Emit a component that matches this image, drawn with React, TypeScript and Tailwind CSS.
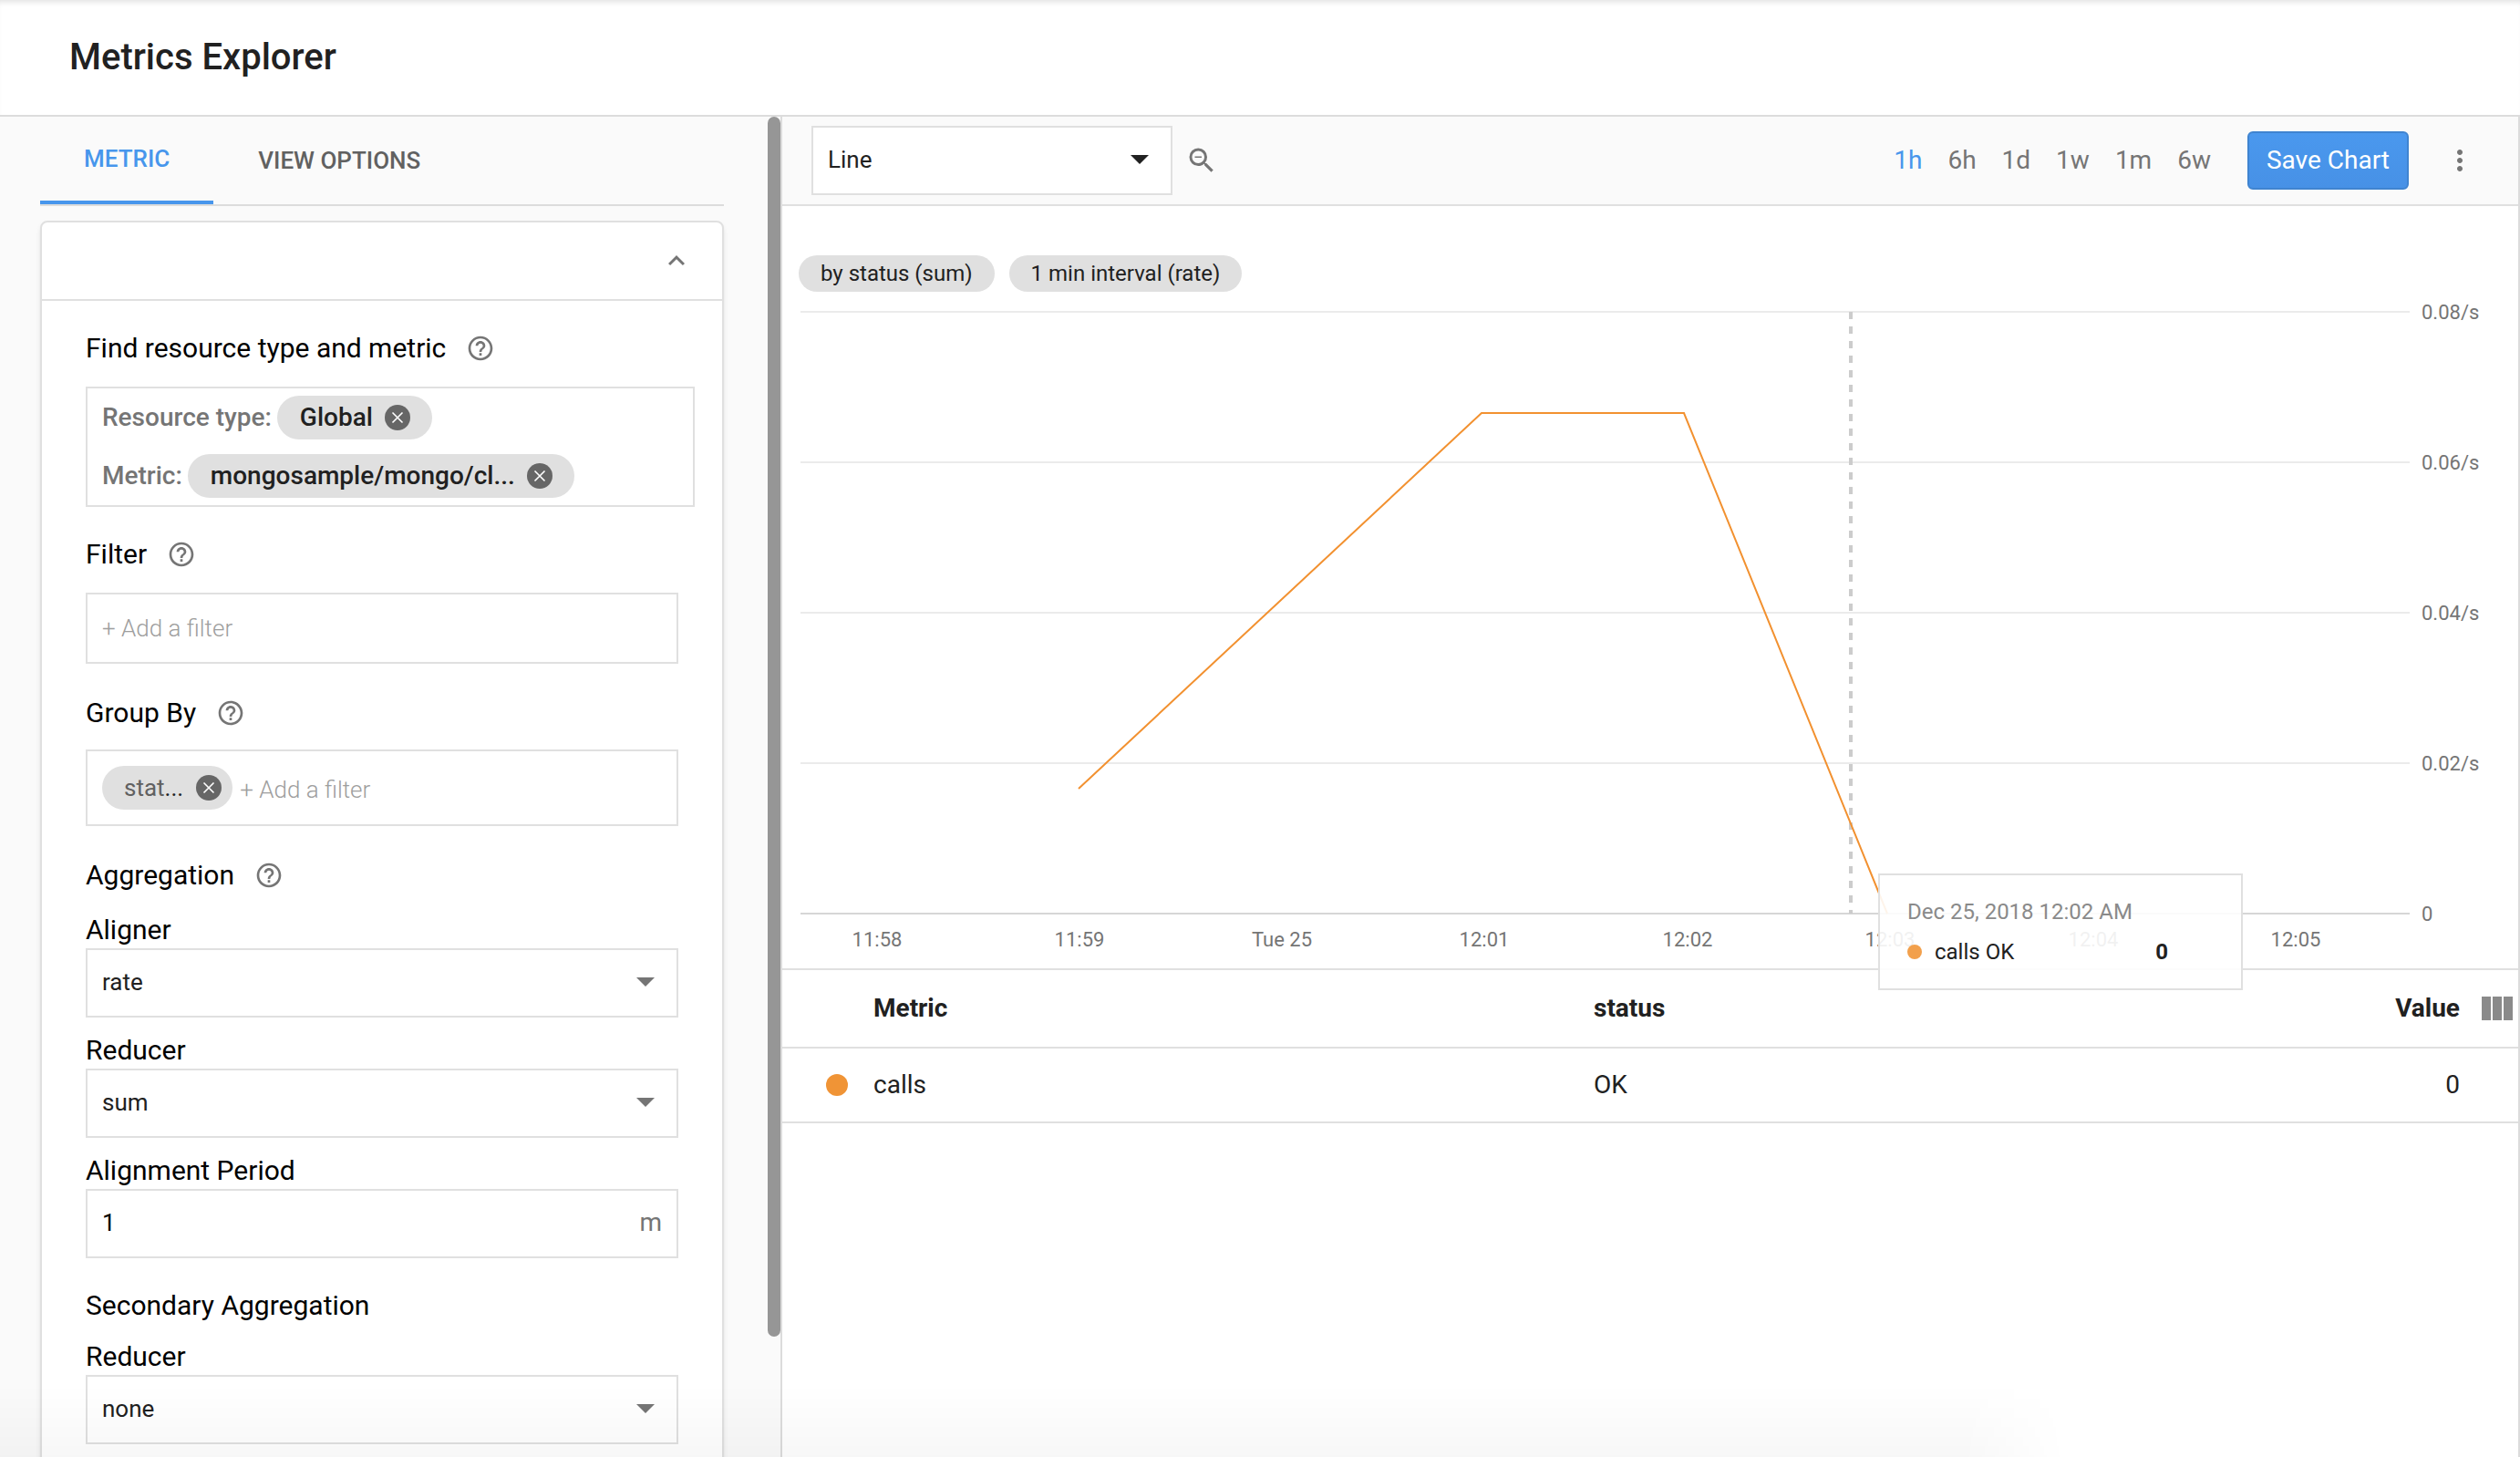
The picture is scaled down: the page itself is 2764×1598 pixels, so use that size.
import { useState } from "react";
import type { ReactNode } from "react";
import { MdExpandLess, MdHelpOutline, MdMoreVert, MdZoomOut } from "react-icons/md";

const ranges = ["1h", "6h", "1d", "1w", "1m", "6w"];

const xLabels = [
  { x: 104, text: "11:58" },
  { x: 326, text: "11:59" },
  { x: 548, text: "Tue 25" },
  { x: 770, text: "12:01" },
  { x: 993, text: "12:02" },
  { x: 1215, text: "12:03" },
  { x: 1438, text: "12:04" },
  { x: 1660, text: "12:05" },
];

const yLabels = [
  { y: 12, text: "0.08/s" },
  { y: 177, text: "0.06/s" },
  { y: 342, text: "0.04/s" },
  { y: 507, text: "0.02/s" },
  { y: 672, text: "0" },
];

const rows = [{ metric: "calls", status: "OK", value: 0 }];

const Caret = ({ className }: { className: string }) => (
  <svg viewBox="0 0 20 10" className={className} aria-hidden="true">
    <path d="M0 0h20L10 10z" fill="currentColor" />
  </svg>
);

const RemoveButton = ({ label }: { label: string }) => (
  <button type="button" aria-label={label} className="shrink-0">
    <svg viewBox="0 0 28 28" className="block w-7 h-7">
      <circle cx="14" cy="14" r="14" fill="#666666" />
      <path d="M8.5 8.5l11 11M19.5 8.5l-11 11" stroke="#ffffff" strokeWidth="1.6" />
    </svg>
  </button>
);

const Chip = ({ children, remove }: { children: ReactNode; remove: string }) => (
  <span className="flex items-center h-12 pl-[25px] pr-6 gap-[13px] rounded-full bg-[#e0e0e0] text-[#212121]">
    {children}
    <RemoveButton label={remove} />
  </span>
);

const Help = ({ topic }: { topic: string }) => (
  <button type="button" aria-label={`Help: ${topic}`} className="text-[#757575]">
    <MdHelpOutline className="w-8 h-8" />
  </button>
);

type SelectFieldProps = { id: string; label: string; value: string; options: string[] };

const SelectField = ({ id, label, value, options }: SelectFieldProps) => (
  <div>
    <label htmlFor={id} className="block text-[30px] leading-10">{label}</label>
    <div className="relative">
      <select
        id={id}
        defaultValue={value}
        className="block w-full h-[76px] pl-4 pb-[2px] appearance-none bg-transparent border-2 border-[#e0e0e0] text-[26px] text-[#212121]"
      >
        {options.map((option) => (
          <option key={option}>{option}</option>
        ))}
      </select>
      <Caret className="absolute right-[26px] top-8 w-5 h-[10px] text-[#757575] pointer-events-none" />
    </div>
  </div>
);

const MetricPanel = () => (
  <section className="mt-4 rounded-t-lg border-2 border-[#e0e0e0] bg-white shadow-md">
    <div className="flex items-center justify-end h-[86px] pr-8 border-b-2 border-[#e0e0e0]">
      <button type="button" aria-label="Collapse" className="text-[#757575]">
        <MdExpandLess className="w-9 h-9" />
      </button>
    </div>

    <div className="px-12 pt-8 pb-12">
      <div className="flex items-center gap-[22px] text-[30px] leading-10">
        <h2>Find resource type and metric</h2>
        <Help topic="resource type and metric" />
      </div>
      <div className="flex flex-col gap-4 mt-[22px] -mr-[18px] py-2 pl-4 border-2 border-[#e0e0e0] text-[28px] font-medium text-[#757575]">
        <div className="flex items-center gap-[6px]">
          Resource type: <Chip remove="Remove Global">Global</Chip>
        </div>
        <div className="flex items-center gap-[6px]">
          Metric: <Chip remove="Remove metric">mongosample/mongo/cl...</Chip>
        </div>
      </div>

      <div className="flex items-center gap-[22px] mt-8 text-[30px] leading-10">
        <label htmlFor="filter">Filter</label>
        <Help topic="filter" />
      </div>
      <input
        id="filter"
        placeholder="+ Add a filter"
        className="block w-full h-[78px] mt-[22px] pl-4 border-2 border-[#e0e0e0] text-[26px] font-light placeholder:text-[#9e9e9e]"
      />

      <div className="flex items-center gap-[22px] mt-[34px] text-[30px] leading-10">
        <label htmlFor="group">Group By</label>
        <Help topic="group by" />
      </div>
      <div className="flex items-center h-[84px] mt-5 pl-4 gap-2 border-2 border-[#e0e0e0] text-[26px]">
        <span className="flex items-center h-12 pl-6 pr-3 gap-[14px] rounded-full bg-[#e0e0e0]">
          <span className="text-[#212121]"><span className="text-[#616161]">stat</span>...</span>
          <RemoveButton label="Remove status" />
        </span>
        <input
          id="group"
          placeholder="+ Add a filter"
          className="flex-1 min-w-0 pt-1 font-light placeholder:text-[#9e9e9e]"
        />
      </div>

      <div className="flex items-center gap-[22px] mt-[34px] mb-5 text-[30px] leading-10">
        <h2>Aggregation</h2>
        <Help topic="aggregation" />
      </div>
      <div className="flex flex-col gap-4">
        <SelectField id="aligner" label="Aligner" value="rate" options={["rate", "delta", "mean"]} />
        <SelectField id="reducer" label="Reducer" value="sum" options={["sum", "mean", "none"]} />
        <div>
          <label htmlFor="period" className="block text-[30px] leading-10">Alignment Period</label>
          <div className="flex items-center h-[76px] px-4 pb-[2px] border-2 border-[#e0e0e0] text-[26px]">
            <input id="period" defaultValue="1" className="flex-1 min-w-0" />
            <span className="text-[28px] text-[#757575]">m</span>
          </div>
        </div>
      </div>

      <h2 className="mt-8 mb-4 text-[30px] leading-10">Secondary Aggregation</h2>
      <SelectField id="reducer2" label="Reducer" value="none" options={["none", "sum", "mean"]} />
    </div>
  </section>
);

const Chart = () => (
  <svg viewBox="0 0 1904 732" className="block w-full" role="img" aria-label="calls per second">
    {yLabels.map(({ y, text }) => (
      <g key={text}>
        <line x1="20" x2="1785" y1={y} y2={y} stroke={y === 672 ? "#d6d6d6" : "#ebebeb"} strokeWidth="2" />
        <text x="1798" y={y + 8} fontSize="22" fill="#757575">{text}</text>
      </g>
    ))}
    {xLabels.map(({ x, text }) => (
      <text key={text} x={x} y="708" fontSize="22" fill="#757575" textAnchor="middle">{text}</text>
    ))}
    <line x1="1172" x2="1172" y1="12" y2="672" stroke="#cccccc" strokeWidth="4" strokeDasharray="8 8" />
    <polyline points="325,535 767,123 989,123 1212,672" fill="none" stroke="#f29130" strokeWidth="2" />
  </svg>
);

const Tooltip = () => (
  <div className="absolute z-10 left-[1202px] top-[628px] w-[400px] h-32 px-[30px] pt-6 border-2 border-[#e0e0e0] bg-white/90 text-2xl">
    <div className="leading-8 text-[#8a8a8a]">Dec 25, 2018 12:02 AM</div>
    <div className="flex items-center mt-3 leading-8 text-[#212121]">
      <span className="w-4 h-4 mr-[14px] rounded-full bg-[#f2a04c]" />
      calls OK
      <span className="ml-auto mr-[50px] font-bold">0</span>
    </div>
  </div>
);

const App = () => {
  const [range, setRange] = useState("1h");

  return (
    <div className="relative flex flex-col h-screen overflow-hidden bg-white font-[Roboto,sans-serif] text-black">
      <header className="flex items-center h-32 shrink-0 px-[76px] border-b-2 border-[#dcdcdc] shadow-[inset_0_6px_6px_-4px_#e0e0e0]">
        <h1 className="text-[40px] font-medium text-[#212121]">Metrics Explorer</h1>
      </header>

      <div className="flex flex-1 min-h-0">
        {/* Sidebar */}
        <aside className="flex w-[858px] shrink-0 border-r-2 border-[#dcdcdc] bg-[#fafafa]">
          <div className="flex-1 pl-11 pr-12 overflow-hidden">
            <div className="flex h-[98px] border-b-2 border-[#dcdcdc] text-[26px] font-medium">
              <button type="button" className="px-12 border-b-4 border-[#4796ec] text-[#4796ec]">METRIC</button>
              <button type="button" className="px-[49px] text-[#616161]">VIEW OPTIONS</button>
            </div>
            <MetricPanel />
          </div>
          <div className="w-[14px]">
            <div className="h-[91%] rounded-full bg-[#969696]" />
          </div>
        </aside>

        {/* Chart side */}
        <main className="flex-1 min-w-0 border-r-2 border-[#dcdcdc]">
          <div className="flex items-center h-[98px] pl-8 pr-[46px] border-b-2 border-[#e0e0e0] bg-[#fafafa]">
            <div className="relative">
              <select
                aria-label="Chart type"
                defaultValue="Line"
                className="block w-[396px] h-[76px] pl-4 pb-[2px] appearance-none border-2 border-[#e0e0e0] bg-white text-[26px] text-[#212121]"
              >
                <option>Line</option>
                <option>Stacked area</option>
                <option>Heatmap</option>
              </select>
              <Caret className="absolute right-[26px] top-8 w-5 h-[10px] text-[#212121] pointer-events-none" />
            </div>
            <button type="button" aria-label="Zoom out" className="ml-[14px] text-[#757575]">
              <MdZoomOut className="w-9 h-9" />
            </button>
            <div className="flex gap-7 ml-auto text-[28px]">
              {ranges.map((item) => (
                <button
                  key={item}
                  type="button"
                  onClick={() => setRange(item)}
                  className={item === range ? "text-[#4796ec]" : "text-[#757575]"}
                >
                  {item}
                </button>
              ))}
            </div>
            <button
              type="button"
              className="h-16 ml-10 px-[19px] rounded-md border-2 border-[#3f84d0] bg-linear-to-b from-[#4a98ee] to-[#4791e6] text-[28px] text-white"
            >
              Save Chart
            </button>
            <button type="button" aria-label="More" className="ml-[38px] text-[#757575]">
              <MdMoreVert className="w-9 h-9" />
            </button>
          </div>

          <div className="flex gap-4 pt-[54px] pb-[10px] pl-[18px] text-2xl leading-10 text-[#212121]">
            <span className="px-6 rounded-full bg-[#e0e0e0]">by status (sum)</span>
            <span className="px-6 rounded-full bg-[#e0e0e0]">1 min interval (rate)</span>
          </div>

          <div className="relative">
            <Chart />
            <Tooltip />
          </div>

          <table className="w-full table-fixed border-y-2 border-[#e0e0e0] text-[28px] text-[#212121]">
            <thead>
              <tr className="h-[86px] border-b-2 border-[#e0e0e0] text-left">
                <th className="w-[100px]" />
                <th className="w-[790px]">Metric</th>
                <th>status</th>
                <th className="text-right">Value</th>
                <th className="w-16">
                  <button type="button" aria-label="Columns" className="block ml-6">
                    <svg viewBox="0 0 34 26" className="block w-[34px] h-[26px]">
                      <path d="M0 0h10v26H0zM12 0h10v26H12zM24 0h10v26H24z" fill="#8a8a8a" />
                    </svg>
                  </button>
                </th>
              </tr>
            </thead>
            <tbody>
              {rows.map((row) => (
                <tr key={row.metric} className="h-[82px]">
                  <td><span className="block w-6 h-6 ml-12 rounded-full bg-[#f09436]" /></td>
                  <td>{row.metric}</td>
                  <td>{row.status}</td>
                  <td className="text-right">{row.value}</td>
                  <td />
                </tr>
              ))}
            </tbody>
          </table>
        </main>
      </div>

      {/* Fade along the bottom edge */}
      <div className="absolute left-0 right-[18%] bottom-0 h-20 bg-linear-to-b from-transparent to-black/3 mask-r-from-95% pointer-events-none" />
    </div>
  );
};

export default App;
